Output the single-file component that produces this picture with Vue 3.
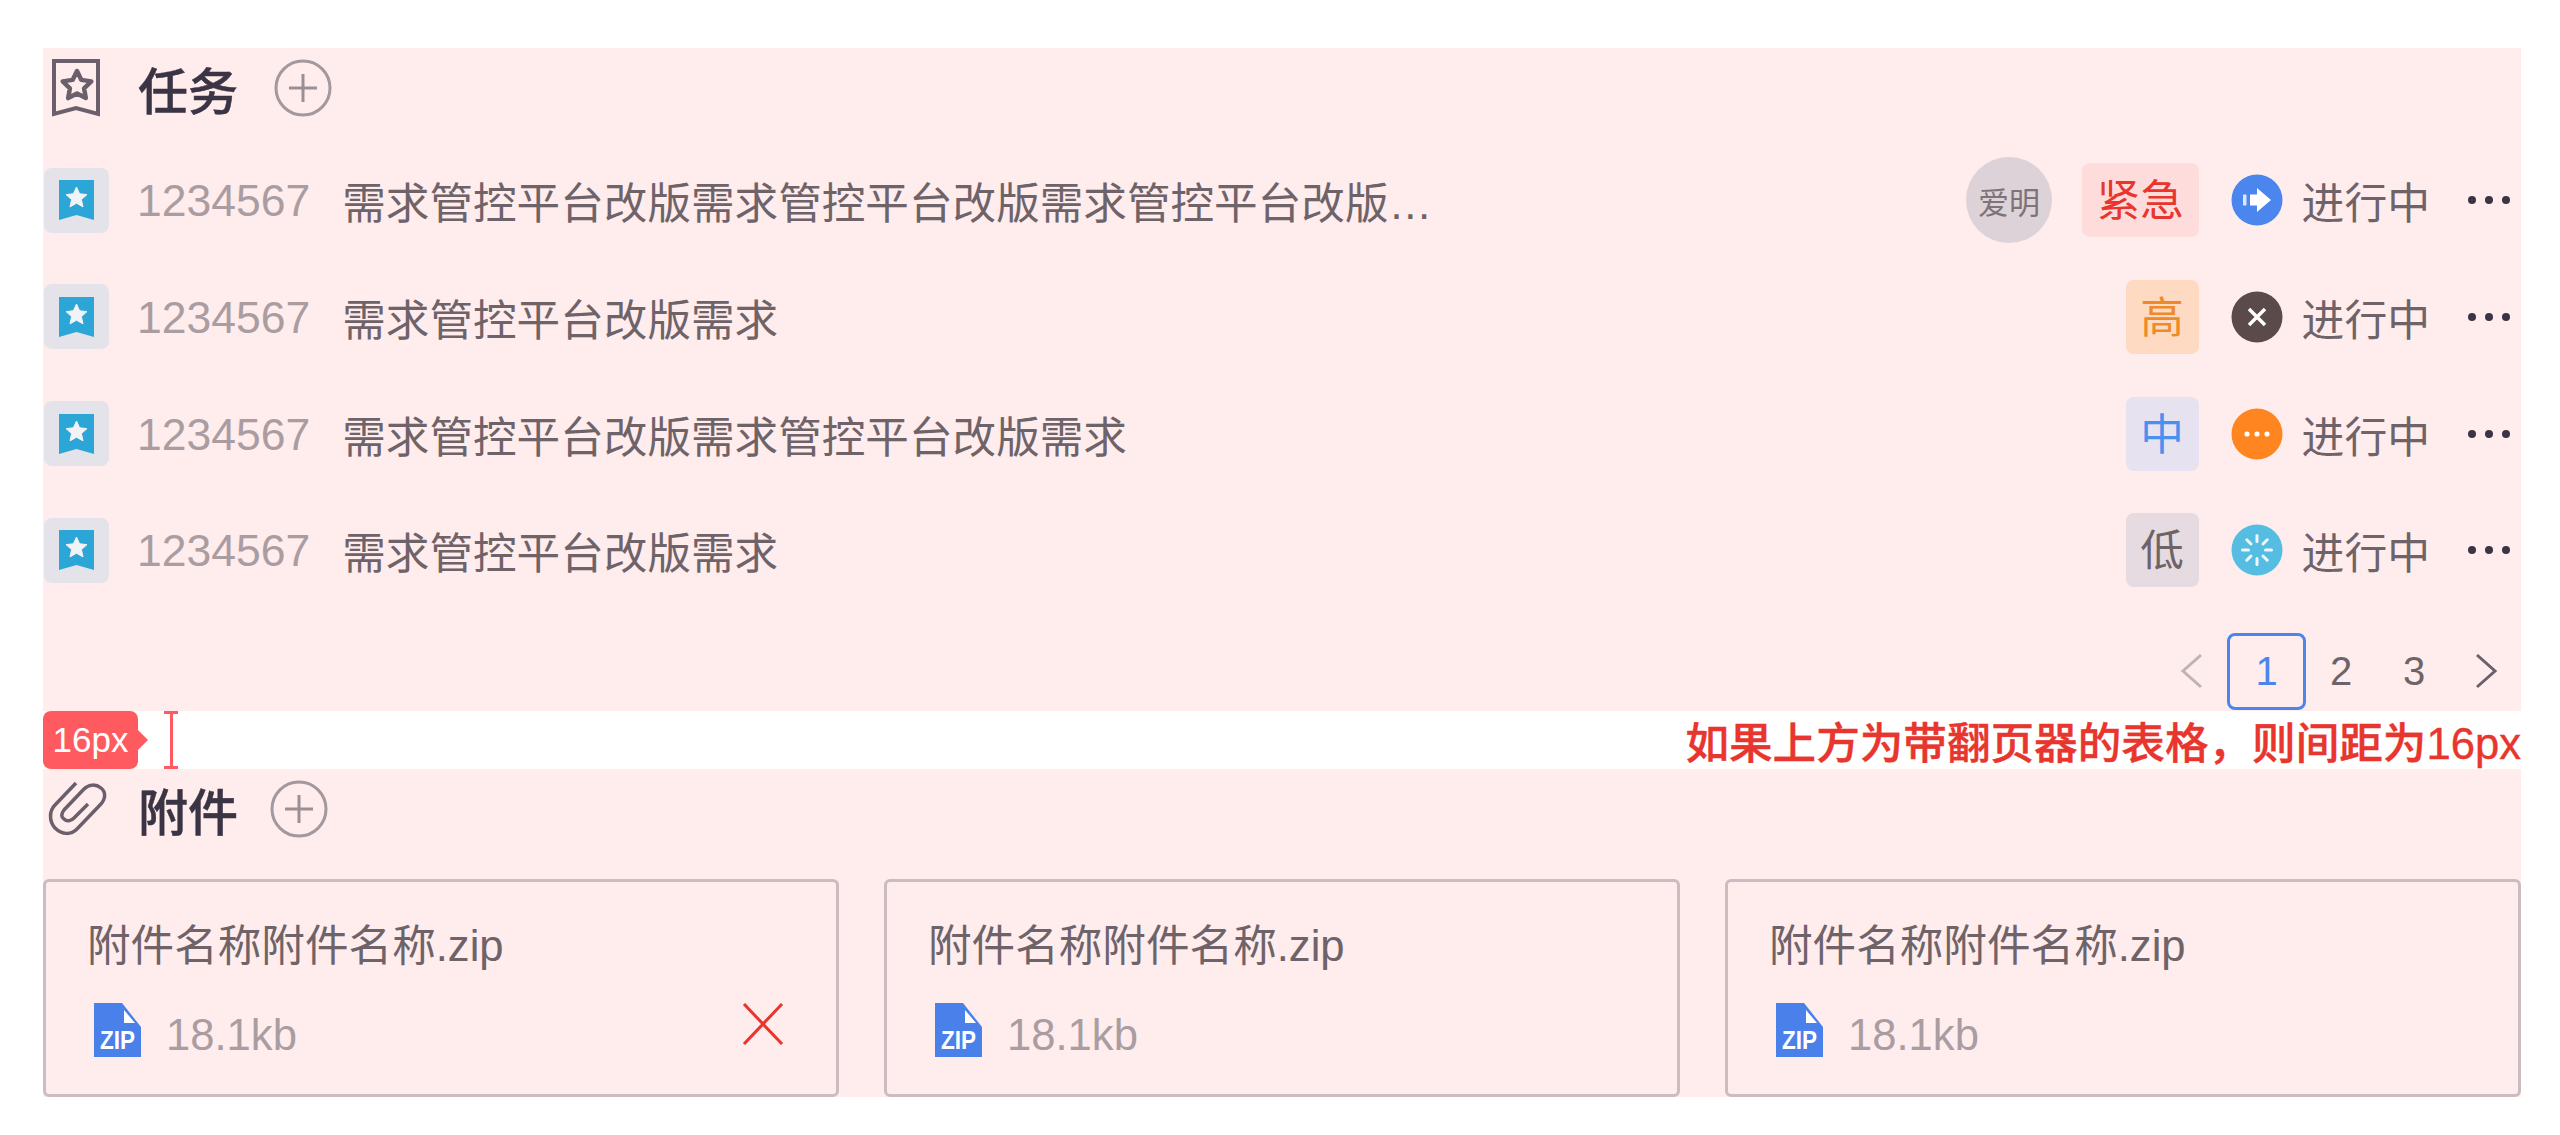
<template>
  <div class="page">
    <section class="block tasks">
      <div class="head">
        <svg class="head-icon" width="48" height="58" viewBox="0 0 48 58">
          <path d="M2 2H46V55L24 49L2 55Z" fill="none" stroke="#6a5f6b" stroke-width="4" />
          <polygon :points="star(25, 27, 15, 7.5)" fill="none" stroke="#6a5f6b" stroke-width="4.5" stroke-linejoin="round" />
        </svg>
        <span class="head-title">任务</span>
        <svg class="add" width="58" height="58" viewBox="0 0 58 58">
          <circle cx="29" cy="29" r="27" fill="none" stroke="#a3989d" stroke-width="3" />
          <path d="M15 29H43M29 15V43" stroke="#9a8f95" stroke-width="3" />
        </svg>
      </div>

      <div class="list">
        <div class="row" v-for="task in tasks" :key="task.title + task.level">
          <div class="type">
            <svg width="35" height="40" viewBox="0 0 35 40">
              <path d="M0 0H35V40L17.5 35L0 40Z" fill="#2ba6d6" />
              <polygon :points="star(17.5, 18, 11, 5.2)" fill="#f1f3f6" stroke="#f1f3f6" stroke-width="1" stroke-linejoin="round" />
            </svg>
          </div>
          <span class="num">1234567</span>
          <span class="title">{{ task.title }}</span>
          <div class="right">
            <div class="avatar" v-if="task.owner">{{ task.owner }}</div>
            <span class="tag" :class="task.tone">{{ task.level }}</span>
            <svg class="state" width="52" height="52" viewBox="0 0 52 52">
              <circle cx="26" cy="26" r="25.5" :fill="task.color" />
              <template v-if="task.icon === 'arrow'">
                <path d="M26 14L40 26L26 38V31.5H19V20.5H26Z" fill="#fff" />
                <rect x="12" y="20.5" width="3.5" height="11" fill="#fff" opacity=".8" />
              </template>
              <path v-else-if="task.icon === 'close'" d="M18 18L34 34M34 18L18 34" stroke="#fff" stroke-width="3.5" />
              <g v-else-if="task.icon === 'dots'" fill="#fff">
                <circle cx="16" cy="26" r="2.6" />
                <circle cx="26" cy="26" r="2.6" />
                <circle cx="36" cy="26" r="2.6" />
              </g>
              <g v-else stroke="#fff" stroke-width="3" stroke-linecap="round" opacity=".9">
                <path v-for="a in spokes" :key="a" d="M26 11.5V17.5" :transform="`rotate(${a} 26 26)`" />
              </g>
            </svg>
            <span class="state-text">进行中</span>
            <svg class="more" width="42" height="10" viewBox="0 0 42 10" fill="#3a3444">
              <circle cx="4" cy="5" r="4" />
              <circle cx="21" cy="5" r="4" />
              <circle cx="38" cy="5" r="4" />
            </svg>
          </div>
        </div>
      </div>

      <div class="pager">
        <span class="page-item">
          <svg width="26" height="36" viewBox="0 0 26 36"><path d="M23 2L5 18L23 34" fill="none" stroke="#bdb3b7" stroke-width="3" /></svg>
        </span>
        <span class="page-item active">1</span>
        <span class="page-item">2</span>
        <span class="page-item">3</span>
        <span class="page-item">
          <svg width="26" height="36" viewBox="0 0 26 36"><path d="M3 2L21 18L3 34" fill="none" stroke="#6a5f6b" stroke-width="3" /></svg>
        </span>
      </div>
    </section>

    <div class="gap">
      <span class="badge">16px</span>
      <span class="beam"></span>
      <span class="note">如果上方为带翻页器的表格&#xFF0C;则间距为16px</span>
    </div>

    <section class="block files">
      <div class="head">
        <svg class="head-icon" width="60" height="58" viewBox="0 0 60 58">
          <path d="M29 2L8 24C2 30 2 40 8 47C15 54 24 54 30 48L53 24C59 18 59 11 54 7C49 3 42 3 37 8L17 29C14 33 14 36 17 38C20 41 24 40 27 37L41 23" fill="none" stroke="#6a5f6b" stroke-width="3.5" />
        </svg>
        <span class="head-title">附件</span>
        <svg class="add" width="58" height="58" viewBox="0 0 58 58">
          <circle cx="29" cy="29" r="27" fill="none" stroke="#a3989d" stroke-width="3" />
          <path d="M15 29H43M29 15V43" stroke="#9a8f95" stroke-width="3" />
        </svg>
      </div>

      <div class="cards">
        <div class="card" v-for="file in files" :key="file.id">
          <div class="file-name">{{ file.name }}</div>
          <div class="file-meta">
            <svg width="47" height="54" viewBox="0 0 47 54">
              <path d="M0 0H28L47 24V54H0Z" fill="#4a80ea" />
              <path d="M30 7L41 20H30Z" fill="#fff" />
              <text x="23.5" y="46" text-anchor="middle" textLength="35" lengthAdjust="spacingAndGlyphs" class="zip">ZIP</text>
            </svg>
            <span class="file-size">{{ file.size }}</span>
            <svg v-if="file.removable" class="remove" width="42" height="42" viewBox="0 0 42 42">
              <path d="M2 1L40 41M40 1L2 41" stroke="#e8352d" stroke-width="3" />
            </svg>
          </div>
        </div>
      </div>
    </section>
  </div>
</template>

<script setup>
const base = '需求管控平台改版'

const tasks = [
  { title: base + base + base + '…', owner: '爱明', level: '紧急', tone: 'urgent', icon: 'arrow', color: '#4a86ee' },
  { title: base + '需求', level: '高', tone: 'high', icon: 'close', color: '#5a4a4a' },
  { title: base + '需求管控平台改版需求', level: '中', tone: 'mid', icon: 'dots', color: '#ff8520' },
  { title: base + '需求', level: '低', tone: 'low', icon: 'spin', color: '#55bde2' }
]

const files = [
  { id: 1, name: '附件名称附件名称.zip', size: '18.1kb', removable: true },
  { id: 2, name: '附件名称附件名称.zip', size: '18.1kb' },
  { id: 3, name: '附件名称附件名称.zip', size: '18.1kb' }
]

const spokes = [0, 45, 90, 135, 180, 225, 270, 315]

// five pointed star, as a points list for <polygon>
function star(cx, cy, outer, inner) {
  const pts = []
  for (let i = 0; i < 10; i++) {
    const r = i % 2 ? inner : outer
    const a = (Math.PI / 5) * i - Math.PI / 2
    pts.push((cx + r * Math.cos(a)).toFixed(1) + ',' + (cy + r * Math.sin(a)).toFixed(1))
  }
  return pts.join(' ')
}
</script>

<style>
html,
body {
  margin: 0;
  background: #fff;
}
</style>

<style scoped>
.page {
  width: 2478px;
  margin-left: 43px;
  padding-top: 48px;
  font-family: "Liberation Sans", "Noto Sans CJK SC", sans-serif;
  font-size: 43.6px;
  color: #6e6369;
}

.block {
  background: #ffecec;
}

.tasks {
  height: 663px;
}

.files {
  height: 328px;
}

.head {
  height: 80px;
  display: flex;
  align-items: center;
}

.head-icon {
  flex: none;
  margin-left: 9px;
}

.files .head-icon {
  margin-left: 4px;
  margin-top: 2px;
}

.head-title {
  margin-left: 38px;
  font-size: 50px;
  font-weight: 500;
  color: #3a3444;
  -webkit-text-stroke: 0.5px #3a3444;
}

.files .head-title {
  margin-left: 31px;
}

.add {
  margin-left: 36px;
}

.files .add {
  margin-left: 32px;
}

.list {
  margin-top: 14px;
}

.row {
  height: 116.67px;
  display: flex;
  align-items: center;
}

.type {
  width: 65px;
  height: 65px;
  margin-left: 1px;
  flex: none;
  border-radius: 8px;
  background: #e3e3e9;
  display: flex;
  align-items: center;
  justify-content: center;
}

.num {
  margin-left: 28px;
  margin-top: 2px;
  font-size: 44.5px;
  color: #a99da2;
}

.title {
  margin-left: 32px;
  white-space: nowrap;
}

.right {
  margin-left: auto;
  display: flex;
  align-items: center;
}

.avatar {
  width: 86px;
  height: 86px;
  margin-right: 30px;
  border-radius: 50%;
  background: #dcd2d8;
  color: #7d7379;
  font-size: 31px;
  display: flex;
  align-items: center;
  justify-content: center;
}

.tag {
  height: 74px;
  padding: 0 14.7px;
  border-radius: 8px;
  line-height: 76px;
}

.urgent {
  background: #ffdcdc;
  color: #e8352d;
}

.high {
  background: #ffdac2;
  color: #ef8a2c;
}

.mid {
  background: #e7e2ef;
  color: #4a90ee;
}

.low {
  background: #e6dbe0;
  color: #6e6369;
}

.state {
  margin-left: 32px;
}

.state-text {
  margin-left: 19px;
  font-size: 42.8px;
}

.more {
  margin-left: 38px;
  margin-right: 11px;
}

.pager {
  margin-top: 24px;
  display: flex;
  justify-content: flex-end;
  gap: 5px;
}

.page-item {
  width: 68px;
  height: 77px;
  display: flex;
  align-items: center;
  justify-content: center;
  font-size: 40px;
}

.page-item.active {
  width: 79px;
  margin: 0 -4px 0 -3px;
  box-sizing: border-box;
  border: 3px solid #4a86ee;
  border-radius: 8px;
  color: #4a86ee;
}

.gap {
  height: 58px;
  display: flex;
  align-items: center;
}

.badge {
  position: relative;
  width: 95px;
  height: 58px;
  border-radius: 8px;
  background: #ff5a5f;
  color: #fff;
  font-size: 35px;
  line-height: 58px;
  text-align: center;
}

.badge::after {
  content: "";
  position: absolute;
  left: 95px;
  top: 19px;
  border-left: 10px solid #ff5a5f;
  border-top: 10px solid transparent;
  border-bottom: 10px solid transparent;
}

.beam {
  width: 14px;
  height: 58px;
  margin-left: 26px;
  box-sizing: border-box;
  border-top: 3px solid #ff5a5f;
  border-bottom: 3px solid #ff5a5f;
  background: linear-gradient(#ff5a5f, #ff5a5f) center / 3px 100% no-repeat;
}

.note {
  margin-left: auto;
  color: #e8352d;
  font-size: 43.6px;
  font-weight: 500;
  -webkit-text-stroke: 0.4px #e8352d;
  white-space: nowrap;
}

.cards {
  margin-top: 30px;
  display: grid;
  grid-template-columns: repeat(3, 1fr);
  gap: 45px;
}

.card {
  height: 218px;
  box-sizing: border-box;
  padding: 36px 40px 0 41px;
  border: 3px solid #cbbcc1;
  border-radius: 6px;
}

.file-name {
  line-height: 56px;
}

.file-meta {
  margin-top: 29px;
  margin-left: 7px;
  display: flex;
  align-items: flex-start;
}

.file-size {
  margin-left: 25px;
  color: #a99da2;
  line-height: 58px;
  margin-top: 3px;
}

.remove {
  margin-left: auto;
  margin-right: 12px;
}

.zip {
  fill: #fff;
  font-family: "Liberation Sans", sans-serif;
  font-size: 26px;
  font-weight: 700;
}
</style>
